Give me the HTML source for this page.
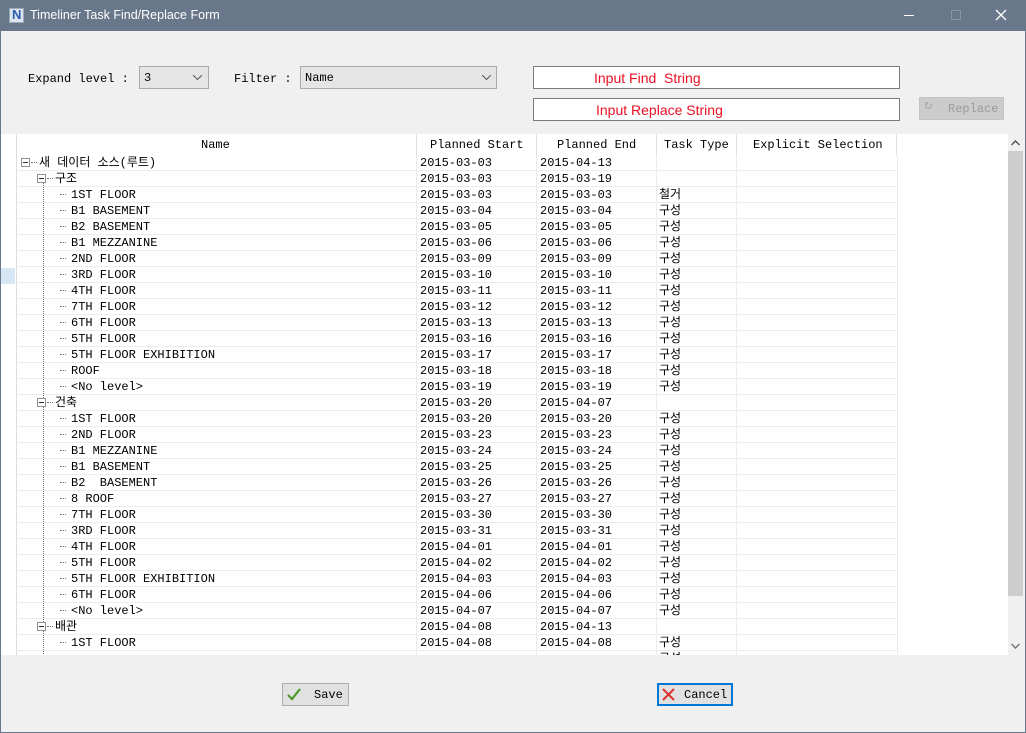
<!DOCTYPE html>
<html><head><meta charset="utf-8"><style>
*{margin:0;padding:0;box-sizing:border-box}
body{width:1026px;height:733px;background:#f0f0f0;position:relative;overflow:hidden;font-family:"Liberation Mono","Noto Sans CJK KR",monospace;font-size:12px;line-height:14px;color:#000}
.tb{position:absolute;left:0;top:0;width:1026px;height:31px;background:#687789;color:#fff;font-family:"Liberation Sans",sans-serif;font-size:12.5px}
.frame{position:absolute;left:0;top:31px;width:1026px;height:702px;border:1px solid #687789;border-top:none}
.a{position:absolute;white-space:pre}
.combo{position:absolute;height:23px;border:1px solid #aaa;background:#e5e5e5;padding:4px 0 0 4px}
.inp{position:absolute;height:23px;border:1px solid #7a7a7a;background:#fff;color:#e81123;font-family:"Liberation Sans",sans-serif;font-size:14px;line-height:18px;padding-top:2px;white-space:pre}
.grid{position:absolute;left:1px;top:134px;width:1024px;height:521px;background:#fff;overflow:hidden}
.r{position:absolute;left:15px;width:881px;height:16px;border-bottom:1px solid #ececec}
.r span{position:absolute;top:1px;white-space:pre;line-height:14px;height:14px}
.c1{left:404px}.c2{left:524px}.c3{left:643px}
.vl{position:absolute;top:21px;width:1px;height:500px;background:#ececec}
.box{position:absolute;width:9px;height:9px;border:1px solid #919191;background:#fff;top:3px}
.box:after{content:"";position:absolute;left:1px;top:3px;width:5px;height:1px;background:#333}
.dl{position:absolute;top:7px;width:6px;border-top:1px dotted #777}
.btn{position:absolute;height:23px;border:1px solid #adadad;background:#e1e1e1;font-size:12px;padding-top:4px}
</style></head><body>
<div class="tb">
<div class="a" style="left:9px;top:8px;width:15px;height:15px;background:#dde6f0;border:1px solid #9ab"><span style="position:absolute;left:2px;top:-1px;color:#2a5aa8;font-weight:bold;font-size:13px">N</span></div>
<div class="a" style="left:30px;top:8px">Timeliner Task Find/Replace Form</div>
<div class="a" style="left:904px;top:15px;width:10px;height:1px;background:#fff"></div>
<div class="a" style="left:951px;top:10px;width:10px;height:10px;border:1px solid #8a96a4"></div>
<svg class="a" style="left:995px;top:9px" width="12" height="12"><path d="M1 1L11 11M11 1L1 11" stroke="#fff" stroke-width="1.3"/></svg>
</div>
<div class="frame"></div>
<div class="a" style="left:28px;top:72px">Expand level :</div>
<div class="combo" style="left:139px;top:66px;width:70px">3<svg class="a" style="left:53px;top:8px" width="9" height="5"><path d="M0 0L4.5 4.5L9 0" stroke="#555" fill="none"/></svg></div>
<div class="a" style="left:234px;top:72px">Filter :</div>
<div class="combo" style="left:300px;top:66px;width:197px">Name<svg class="a" style="left:181px;top:8px" width="9" height="5"><path d="M0 0L4.5 4.5L9 0" stroke="#555" fill="none"/></svg></div>
<div class="inp" style="left:533px;top:66px;width:367px;padding-left:60px">Input Find  String</div>
<div class="inp" style="left:533px;top:98px;width:367px;padding-left:62px">Input Replace String</div>
<div class="btn" style="left:919px;top:97px;width:85px;background:#ccc;border-color:#c4c4c4;color:#9a9a9a;padding-left:28px">Replace<span class="a" style="left:4px;top:1px;font-size:14px;color:#aaa">↻</span></div>
<div class="grid">
<div class="a" style="left:15px;top:0;width:1px;height:521px;background:#ddd"></div>
<div class="a" style="left:0;top:134px;width:14px;height:16px;background:#d6e6f5"></div>
<div class="a" style="left:15px;top:0;width:881px;height:21px">
<span class="a" style="left:185px;top:4px">Name</span>
<span class="a" style="left:400px;top:0;width:1px;height:21px;background:#e0e0e0"></span>
<span class="a" style="left:414px;top:4px">Planned Start</span>
<span class="a" style="left:520px;top:0;width:1px;height:21px;background:#e0e0e0"></span>
<span class="a" style="left:541px;top:4px">Planned End</span>
<span class="a" style="left:640px;top:0;width:1px;height:21px;background:#e0e0e0"></span>
<span class="a" style="left:648px;top:4px">Task Type</span>
<span class="a" style="left:720px;top:0;width:1px;height:21px;background:#e0e0e0"></span>
<span class="a" style="left:737px;top:4px">Explicit Selection</span>
<span class="a" style="left:880px;top:0;width:1px;height:21px;background:#e0e0e0"></span>
</div>
<div class="vl" style="left:415px"></div><div class="vl" style="left:535px"></div><div class="vl" style="left:655px"></div><div class="vl" style="left:735px"></div><div class="vl" style="left:896px"></div>
<div class="a" style="left:42px;top:46px;height:480px;border-left:1px dotted #777"></div>
<div class="r" style="top:21px"><i class="box" style="left:5px"></i><i class="dl" style="left:15px"></i><span style="left:23px">새 데이터 소스(루트)</span><span class="c1">2015-03-03</span><span class="c2">2015-04-13</span></div>
<div class="r" style="top:37px"><i class="box" style="left:21px"></i><i class="dl" style="left:31px"></i><span style="left:39px">구조</span><span class="c1">2015-03-03</span><span class="c2">2015-03-19</span></div>
<div class="r" style="top:53px"><i class="dl" style="left:44px"></i><span style="left:55px">1ST FLOOR</span><span class="c1">2015-03-03</span><span class="c2">2015-03-03</span><span class="c3">철거</span></div>
<div class="r" style="top:69px"><i class="dl" style="left:44px"></i><span style="left:55px">B1 BASEMENT</span><span class="c1">2015-03-04</span><span class="c2">2015-03-04</span><span class="c3">구성</span></div>
<div class="r" style="top:85px"><i class="dl" style="left:44px"></i><span style="left:55px">B2 BASEMENT</span><span class="c1">2015-03-05</span><span class="c2">2015-03-05</span><span class="c3">구성</span></div>
<div class="r" style="top:101px"><i class="dl" style="left:44px"></i><span style="left:55px">B1 MEZZANINE</span><span class="c1">2015-03-06</span><span class="c2">2015-03-06</span><span class="c3">구성</span></div>
<div class="r" style="top:117px"><i class="dl" style="left:44px"></i><span style="left:55px">2ND FLOOR</span><span class="c1">2015-03-09</span><span class="c2">2015-03-09</span><span class="c3">구성</span></div>
<div class="r" style="top:133px"><i class="dl" style="left:44px"></i><span style="left:55px">3RD FLOOR</span><span class="c1">2015-03-10</span><span class="c2">2015-03-10</span><span class="c3">구성</span></div>
<div class="r" style="top:149px"><i class="dl" style="left:44px"></i><span style="left:55px">4TH FLOOR</span><span class="c1">2015-03-11</span><span class="c2">2015-03-11</span><span class="c3">구성</span></div>
<div class="r" style="top:165px"><i class="dl" style="left:44px"></i><span style="left:55px">7TH FLOOR</span><span class="c1">2015-03-12</span><span class="c2">2015-03-12</span><span class="c3">구성</span></div>
<div class="r" style="top:181px"><i class="dl" style="left:44px"></i><span style="left:55px">6TH FLOOR</span><span class="c1">2015-03-13</span><span class="c2">2015-03-13</span><span class="c3">구성</span></div>
<div class="r" style="top:197px"><i class="dl" style="left:44px"></i><span style="left:55px">5TH FLOOR</span><span class="c1">2015-03-16</span><span class="c2">2015-03-16</span><span class="c3">구성</span></div>
<div class="r" style="top:213px"><i class="dl" style="left:44px"></i><span style="left:55px">5TH FLOOR EXHIBITION</span><span class="c1">2015-03-17</span><span class="c2">2015-03-17</span><span class="c3">구성</span></div>
<div class="r" style="top:229px"><i class="dl" style="left:44px"></i><span style="left:55px">ROOF</span><span class="c1">2015-03-18</span><span class="c2">2015-03-18</span><span class="c3">구성</span></div>
<div class="r" style="top:245px"><i class="dl" style="left:44px"></i><span style="left:55px">&lt;No level&gt;</span><span class="c1">2015-03-19</span><span class="c2">2015-03-19</span><span class="c3">구성</span></div>
<div class="r" style="top:261px"><i class="box" style="left:21px"></i><i class="dl" style="left:31px"></i><span style="left:39px">건축</span><span class="c1">2015-03-20</span><span class="c2">2015-04-07</span></div>
<div class="r" style="top:277px"><i class="dl" style="left:44px"></i><span style="left:55px">1ST FLOOR</span><span class="c1">2015-03-20</span><span class="c2">2015-03-20</span><span class="c3">구성</span></div>
<div class="r" style="top:293px"><i class="dl" style="left:44px"></i><span style="left:55px">2ND FLOOR</span><span class="c1">2015-03-23</span><span class="c2">2015-03-23</span><span class="c3">구성</span></div>
<div class="r" style="top:309px"><i class="dl" style="left:44px"></i><span style="left:55px">B1 MEZZANINE</span><span class="c1">2015-03-24</span><span class="c2">2015-03-24</span><span class="c3">구성</span></div>
<div class="r" style="top:325px"><i class="dl" style="left:44px"></i><span style="left:55px">B1 BASEMENT</span><span class="c1">2015-03-25</span><span class="c2">2015-03-25</span><span class="c3">구성</span></div>
<div class="r" style="top:341px"><i class="dl" style="left:44px"></i><span style="left:55px">B2  BASEMENT</span><span class="c1">2015-03-26</span><span class="c2">2015-03-26</span><span class="c3">구성</span></div>
<div class="r" style="top:357px"><i class="dl" style="left:44px"></i><span style="left:55px">8 ROOF</span><span class="c1">2015-03-27</span><span class="c2">2015-03-27</span><span class="c3">구성</span></div>
<div class="r" style="top:373px"><i class="dl" style="left:44px"></i><span style="left:55px">7TH FLOOR</span><span class="c1">2015-03-30</span><span class="c2">2015-03-30</span><span class="c3">구성</span></div>
<div class="r" style="top:389px"><i class="dl" style="left:44px"></i><span style="left:55px">3RD FLOOR</span><span class="c1">2015-03-31</span><span class="c2">2015-03-31</span><span class="c3">구성</span></div>
<div class="r" style="top:405px"><i class="dl" style="left:44px"></i><span style="left:55px">4TH FLOOR</span><span class="c1">2015-04-01</span><span class="c2">2015-04-01</span><span class="c3">구성</span></div>
<div class="r" style="top:421px"><i class="dl" style="left:44px"></i><span style="left:55px">5TH FLOOR</span><span class="c1">2015-04-02</span><span class="c2">2015-04-02</span><span class="c3">구성</span></div>
<div class="r" style="top:437px"><i class="dl" style="left:44px"></i><span style="left:55px">5TH FLOOR EXHIBITION</span><span class="c1">2015-04-03</span><span class="c2">2015-04-03</span><span class="c3">구성</span></div>
<div class="r" style="top:453px"><i class="dl" style="left:44px"></i><span style="left:55px">6TH FLOOR</span><span class="c1">2015-04-06</span><span class="c2">2015-04-06</span><span class="c3">구성</span></div>
<div class="r" style="top:469px"><i class="dl" style="left:44px"></i><span style="left:55px">&lt;No level&gt;</span><span class="c1">2015-04-07</span><span class="c2">2015-04-07</span><span class="c3">구성</span></div>
<div class="r" style="top:485px"><i class="box" style="left:21px"></i><i class="dl" style="left:31px"></i><span style="left:39px">배관</span><span class="c1">2015-04-08</span><span class="c2">2015-04-13</span></div>
<div class="r" style="top:501px"><i class="dl" style="left:44px"></i><span style="left:55px">1ST FLOOR</span><span class="c1">2015-04-08</span><span class="c2">2015-04-08</span><span class="c3">구성</span></div>
<div class="r" style="top:517px"><span class="c3">구성</span></div>
<div class="a" style="left:1007px;top:0;width:17px;height:521px;background:#f0f0f0"></div>
<div class="a" style="left:1007px;top:17px;width:15px;height:445px;background:#cdcdcd"></div>
<svg class="a" style="left:1010px;top:6px" width="9" height="6"><path d="M0.5 5L4.5 1L8.5 5" stroke="#555" stroke-width="1.5" fill="none"/></svg>
<svg class="a" style="left:1010px;top:509px" width="9" height="6"><path d="M0.5 1L4.5 5L8.5 1" stroke="#777" stroke-width="1.5" fill="none"/></svg>
</div>
<div class="btn" style="left:282px;top:683px;width:67px;padding-left:31px">Save<svg class="a" style="left:4px;top:4px" width="14" height="13"><path d="M1 7L5 11L13 1" stroke="#4a9a2a" stroke-width="2.2" fill="none"/></svg></div>
<div class="btn" style="left:657px;top:683px;width:76px;padding-left:25px;border:2px solid #0078d7;padding-top:3px">Cancel<svg class="a" style="left:3px;top:3px" width="13" height="13"><path d="M1 1L12 12M12 1L1 12" stroke="#d33" stroke-width="2" fill="none"/></svg></div>
</body></html>
